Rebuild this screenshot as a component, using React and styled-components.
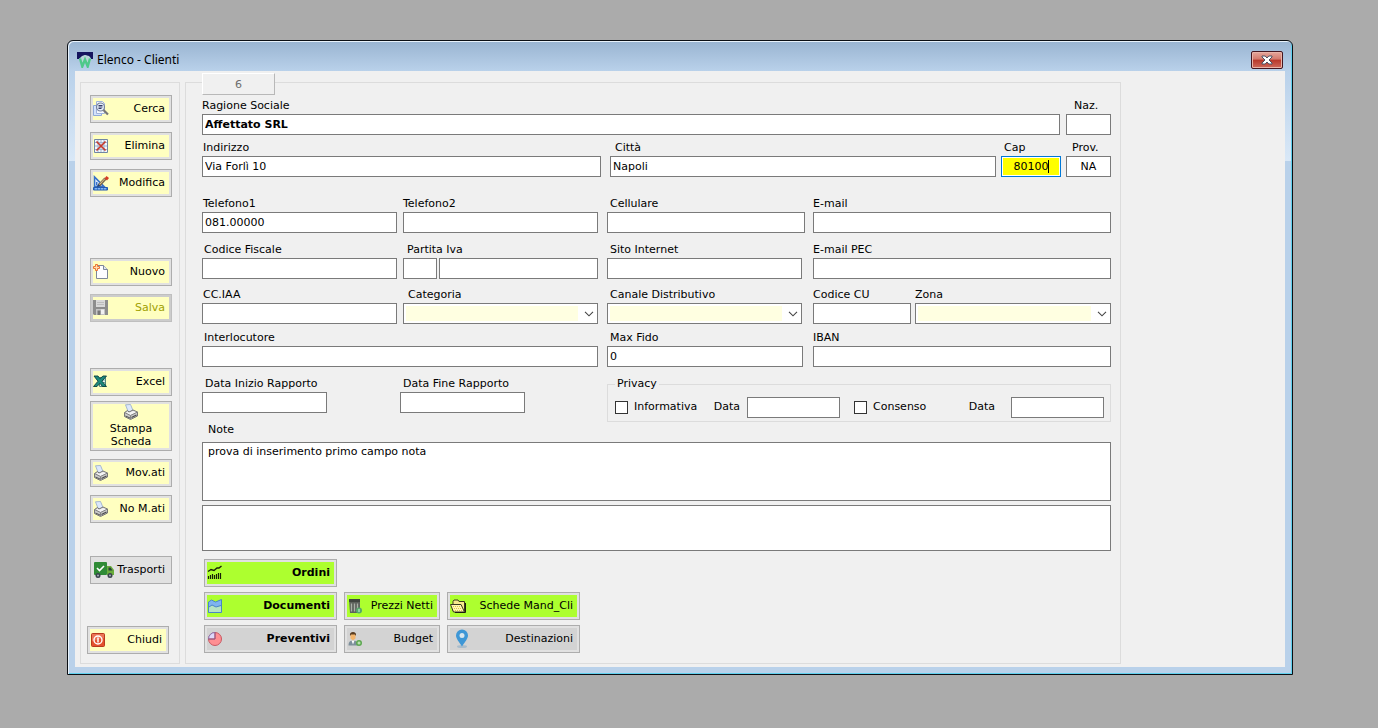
import React, { useId } from 'react'
import styled, { createGlobalStyle, css } from 'styled-components'

export default function App() {
  return (
    <Desktop>
      <GlobalStyle />
      <Window>
        <TitleBar>
          <AppIcon />
          <Title>Elenco - Clienti</Title>
          <CloseButton type="button" aria-label="Chiudi finestra">
            <CloseIcon />
          </CloseButton>
        </TitleBar>
        <Client>
          <Sidebar>
            <Group $gap={9}>
              <Tool icon={<SearchIcon />}>Cerca</Tool>
              <Tool icon={<DeleteIcon />}>Elimina</Tool>
              <Tool icon={<EditIcon />}>Modifica</Tool>
            </Group>
            <Group $top={61} $gap={8}>
              <Tool icon={<NewIcon />}>Nuovo</Tool>
              <Tool icon={<SaveIcon />} disabled>
                Salva
              </Tool>
            </Group>
            <Group $top={46} $gap={5}>
              <Tool icon={<ExcelIcon />}>Excel</Tool>
              <StackedButton type="button">
                <PrinterIcon />
                Stampa
                <br />
                Scheda
              </StackedButton>
            </Group>
            <Group $top={8} $gap={8}>
              <Tool icon={<PrinterIcon />}>Mov.ati</Tool>
              <Tool icon={<PrinterIcon />}>No M.ati</Tool>
            </Group>
            <Group $top={33}>
              <Tool icon={<TruckIcon />} tone="plain">
                Trasporti
              </Tool>
            </Group>
            <Footer>
              <Tool icon={<PowerIcon />}>Chiudi</Tool>
            </Footer>
          </Sidebar>
          <ClientForm />
        </Client>
      </Window>
    </Desktop>
  )
}

function ClientForm() {
  return (
    <Panel onSubmit={(e) => e.preventDefault()}>
      <Counter>6</Counter>
      <Row $cols="1fr 45px" $gap={6} $top={3}>
        <Field label="Ragione Sociale" value="Affettato SRL" bold />
        <Field label="Naz." indent={8} />
      </Row>
      <Row $cols="399fr 501fr" $gap={9} $top={5}>
        <Field label="Indirizzo" value="Via Forlì 10" indent={1} />
        <Row $cols="1fr 60px 45px" $gap={5}>
          <Field label="Città" value="Napoli" indent={5} />
          <Field label="Cap" value="80100" indent={3} align="center" active />
          <Field label="Prov." value="NA" indent={6} align="center" />
        </Row>
      </Row>
      <Halves $top={19}>
        <Row $cols="1fr 1fr" $gap={6}>
          <Field label="Telefono1" value="081.00000" indent={1} />
          <Field label="Telefono2" />
        </Row>
        <Row $cols="198fr 298fr" $gap={8}>
          <Field label="Cellulare" indent={3} />
          <Field label="E-mail" />
        </Row>
      </Halves>
      <Halves $top={9}>
        <Row $cols="195fr 195fr" $gap={6}>
          <Field label="Codice Fiscale" indent={2} />
          <VatField />
        </Row>
        <Row $cols="195fr 298fr" $gap={11}>
          <Field label="Sito Internet" indent={3} />
          <Field label="E-mail PEC" />
        </Row>
      </Halves>
      <Halves $top={8}>
        <Row $cols="1fr 1fr" $gap={6}>
          <Field label="CC.IAA" indent={1} />
          <SelectField label="Categoria" indent={5} />
        </Row>
        <Row $cols="195fr 298fr" $gap={11}>
          <SelectField label="Canale Distributivo" indent={3} />
          <Row $cols="98fr 196fr" $gap={4}>
            <Field label="Codice CU" />
            <SelectField label="Zona" />
          </Row>
        </Row>
      </Halves>
      <Halves $top={6}>
        <Field label="Interlocutore" indent={2} />
        <Row $cols="196fr 298fr" $gap={10}>
          <Field label="Max Fido" value="0" indent={3} />
          <Field label="IBAN" />
        </Row>
      </Halves>
      <Halves $top={9}>
        <Row $cols="198fr 198fr" $gap={0}>
          <Field label="Data Inizio Rapporto" indent={3} width={125} />
          <Field label="Data Fine Rapporto" indent={3} width={125} />
        </Row>
        <Privacy>
          <legend>Privacy</legend>
          <PrivacyPart>
            <CheckLabel>
              <Check type="checkbox" />
              Informativa
            </CheckLabel>
            <DateLabel $gap={7}>
              Data
              <Input type="text" />
            </DateLabel>
          </PrivacyPart>
          <PrivacyPart>
            <CheckLabel>
              <Check type="checkbox" />
              Consenso
            </CheckLabel>
            <DateLabel $gap={16}>
              Data
              <Input type="text" />
            </DateLabel>
          </PrivacyPart>
        </Privacy>
      </Halves>
      <Notes>
        <Label htmlFor="note" $indent={6}>
          Note
        </Label>
        <NoteArea id="note" $height={59} defaultValue="prova di inserimento primo campo nota" />
        <NoteArea aria-label="Note 2" $height={46} />
      </Notes>
      <Links>
        <FirstLink>
          <Tool icon={<OrdersIcon />} tone="green" bold>
            Ordini
          </Tool>
        </FirstLink>
        <Tool icon={<AreaIcon />} tone="green" bold>
          Documenti
        </Tool>
        <Tool icon={<CalculatorIcon />} tone="green">
          Prezzi Netti
        </Tool>
        <Tool icon={<FolderIcon />} tone="green">
          Schede Mand_Cli
        </Tool>
        <Tool icon={<PieIcon />} tone="gray" bold>
          Preventivi
        </Tool>
        <Tool icon={<PersonIcon />} tone="gray">
          Budget
        </Tool>
        <Tool icon={<PinIcon />} tone="gray">
          Destinazioni
        </Tool>
      </Links>
    </Panel>
  )
}

function Tool({ icon, tone = 'yellow', bold, disabled, children }) {
  return (
    <ToolButton type="button" $tone={tone} $bold={bold} disabled={disabled}>
      {icon}
      <span>{children}</span>
    </ToolButton>
  )
}

function Field({ label, value, indent = 0, bold, align, active, width }) {
  const id = useId()
  return (
    <FieldBox>
      <Label htmlFor={id} $indent={indent}>
        {label}
      </Label>
      <Input id={id} type="text" defaultValue={value} $bold={bold} $align={align} $active={active} $width={width} />
    </FieldBox>
  )
}

function VatField() {
  return (
    <FieldBox>
      <Label htmlFor="piva" $indent={4}>
        Partita Iva
      </Label>
      <Row $cols="34px 1fr" $gap={2}>
        <Input type="text" aria-label="Prefisso Partita Iva" />
        <Input id="piva" type="text" />
      </Row>
    </FieldBox>
  )
}

function SelectField({ label, indent = 0 }) {
  const id = useId()
  return (
    <FieldBox>
      <Label htmlFor={id} $indent={indent}>
        {label}
      </Label>
      <SelectBox>
        <Select id={id} />
        <svg width="10" height="6" viewBox="0 0 10 6">
          <path d="M1 .8l4 4 4-4" fill="none" stroke="#444" strokeWidth="1.1" />
        </svg>
      </SelectBox>
    </FieldBox>
  )
}

function Icon({ width = 16, children }) {
  return (
    <svg width={width} height="16" viewBox={`0 0 ${width} 16`} fill="none" aria-hidden="true">
      {children}
    </svg>
  )
}

const AppIcon = () => (
  <Icon>
    <path d="M0 0h16v7h-2l-1-2-3-1-2-1-3 2-3 2H0z" fill="#15155e" />
    <path d="M2 7l3-3 3-1 4 1 2 3v3H3z" fill="#b9d6d8" />
    <path d="M3 6.500l2.300 8 2.700-7 2.700 7 2.300-8" stroke="#4fc98a" strokeWidth="2.400" />
  </Icon>
)

const CloseIcon = () => (
  <svg width="12" height="10" viewBox="0 0 12 10" aria-hidden="true">
    <path
      d="M1 1h3.200L6 3l1.800-2H11v1L8 5l3 3v1H7.800L6 7 4.200 9H1V8l3-3-3-3z"
      fill="#fff"
      stroke="#4a5163"
      strokeWidth="1"
    />
  </svg>
)

const SearchIcon = () => (
  <Icon>
    <path d="M.5 4.500h8v10h-8z" fill="#d5e3fa" stroke="#8fa9d8" />
    <path d="M3.500.5h6l2 2v10h-8z" fill="#f4f8ff" stroke="#a0b4dc" />
    <circle cx="7.500" cy="6" r="4" fill="#e5effc" stroke="#77839b" strokeWidth="1.200" />
    <path d="M5.500 4.500h4M5.500 6h4M5.500 7.500h3" stroke="#343b66" />
    <path d="M10.500 9l4.500 4.500" stroke="#777" strokeWidth="2.200" />
  </Icon>
)

const DeleteIcon = () => (
  <Icon>
    <path d="M1.500 1.500h13v13h-13z" fill="#f3f6fb" stroke="#7186a4" />
    <path d="M2 4.500h12M2 8h12M2 11.500h12M5 2v12M8 2v12M11 2v12" stroke="#9fb4d0" />
    <path d="M3.500 3.500l9 9M12.500 3.500l-9 9" stroke="#c43a2c" strokeWidth="1.700" />
  </Icon>
)

const EditIcon = () => (
  <Icon>
    <path d="M1.500 2v9.500H11z" fill="#dceafd" stroke="#3670c8" strokeWidth="1.600" />
    <path d="M3.500 7v3h3z" fill="#fff" stroke="#3670c8" />
    <path d="M.5 12.500h14v2.500H.5z" fill="#3f85dc" stroke="#2459ae" />
    <path d="M3 13v1.500M6 13v1.500M9 13v1.500M12 13v1.500" stroke="#cfe3ff" />
    <path d="M6 10.500l6.500-7" stroke="#7c6c50" strokeWidth="3" />
    <path d="M6.500 9.500L12 3.500" stroke="#e3c78c" />
    <path d="M11.500 3.500l2-2.500 2.500 2-2 2.500z" fill="#d63c24" />
    <path d="M5 9l2.500 2L4 12z" fill="#26406e" />
  </Icon>
)

const NewIcon = () => (
  <Icon>
    <path d="M3.500 1.500h7l4 4v9h-11z" fill="#fdfdff" stroke="#7e8899" />
    <path d="M10.500 1.500v4h4" fill="#dfe6f2" stroke="#7e8899" />
    <path d="M2.500.5h2v2h2v2h-2v2h-2v-2h-2v-2h2z" fill="#ffdcae" stroke="#ea7433" />
  </Icon>
)

const SaveIcon = () => (
  <Icon>
    <path d="M0 0h15v15H1l-1-1z" fill="#8d8d8d" />
    <path d="M3 0h9v7H3z" fill="#d9d9d9" />
    <path d="M4 2.500h7M4 4.500h7" stroke="#bdbdbd" />
    <path d="M3 9h9v6H3z" fill="#c5c5c5" />
    <path d="M4.500 10.500h3V15h-3z" fill="#777" />
    <path d="M8 9.500h3V14H8z" fill="#f1f1f1" />
  </Icon>
)

const ExcelIcon = () => (
  <Icon>
    <path d="M6.500 3.500h6v9h-6z" fill="#e6f3ee" stroke="#51877c" />
    <path d="M8 6h4M8 8.500h4M8 11h4" stroke="#79aa9f" />
    <path
      d="M1 2h4l2 2.700L10 2h3.500L9 7.200l4.500 5.300h-4L7 9.300 4 12.500H.5L5 7.200z"
      fill="#1c8a7c"
      stroke="#0d3f40"
      strokeWidth=".9"
    />
  </Icon>
)

const PrinterIcon = () => (
  <Icon>
    <path d="M2.500.8l5-.3 2.500 6-4.500 2z" fill="#dce8fc" stroke="#94a9cc" strokeWidth=".8" />
    <path d="M1.500 8.500L4.500 6.500l1.500 1.500 4-2 4.500 2v4l-7 3.500-6-3z" fill="#c9c9c9" stroke="#777" />
    <path d="M3 8.800l4.500 2.200 6-2.800-3.500-1.200-4 1.800-1.500-1z" fill="#f4f4f4" />
    <path d="M1.500 8.500l6 3 7-3.500M7.500 11.500V15" stroke="#858585" />
    <path d="M8.500 13.500l5-2.500" stroke="#4a4a4a" strokeWidth="1.300" />
    <path d="M2.500 12l4.500 2" stroke="#555" />
  </Icon>
)

const TruckIcon = () => (
  <Icon width={21}>
    <rect x="1" y="0" width="13" height="13" rx="1" fill="#2f8b36" />
    <path d="M14 4h4l3 4v5h-7z" fill="#69ad3c" />
    <path d="M15.500 5.500h2L19.500 8.500h-4z" fill="#25443b" />
    <path d="M4 6l2.500 2.500L11 4" stroke="#fff" strokeWidth="1.600" />
    <circle cx="5" cy="13.500" r="2.500" fill="#39424d" />
    <circle cx="5" cy="13.500" r="1" fill="#a8b0b8" />
    <circle cx="17" cy="13.500" r="2.500" fill="#39424d" />
    <circle cx="17" cy="13.500" r="1" fill="#a8b0b8" />
  </Icon>
)

const PowerIcon = () => (
  <Icon>
    <rect x="1.500" y="1.500" width="13" height="13" rx="1" fill="#e4512e" stroke="#b83a1e" />
    <path d="M2 2h12v4L2 9z" fill="#f08466" opacity=".7" />
    <circle cx="8" cy="8" r="4" stroke="#fff" strokeWidth="1.400" />
    <path d="M8 5.500v5" stroke="#fff" strokeWidth="1.500" />
  </Icon>
)

const OrdersIcon = () => (
  <Icon>
    <path
      d="M1.500 14v-3M3.500 14v-4M5.500 14V9M7.500 14v-4M9.500 14V9M11.500 14V8M13.500 14V8"
      stroke="#182008"
      strokeWidth="1.200"
    />
    <path d="M1 6.500l3-2 3 1 3-2.500h2L14.500 1" stroke="#182008" strokeWidth="1.400" />
  </Icon>
)

const AreaIcon = () => (
  <Icon>
    <path d="M1.500 4l3-2 4 2 6-2.500v13h-13z" fill="#7eb4f0" stroke="#4a86c6" />
    <path d="M2 9l3-2 4 2 5-1.500v6.500H2z" fill="#b6e3c4" />
    <path d="M2 9l3-2 4 2 5-1.500" stroke="#4a86c6" />
  </Icon>
)

const CalculatorIcon = () => (
  <Icon>
    <path d="M2 1h11v14H3z" fill="#5d625c" />
    <path d="M2 1h11v3H2z" fill="#404540" />
    <path d="M4.500 5.500v8M7.500 5.500v8M10.500 5.500v8" stroke="#a9b0a7" strokeWidth="1.300" />
    <circle cx="12" cy="12.500" r="3" fill="#55a76b" />
    <path d="M12 11v3" stroke="#d6f3dc" />
  </Icon>
)

const FolderIcon = () => (
  <Icon>
    <path d="M3 3.500l1-1.500h4l1 1.500h5.500V13H3z" fill="#f6e98c" stroke="#3a3a1c" />
    <path d="M.5 6.500H11l3.500 7.500h-11z" fill="#fff6b0" stroke="#3a3a1c" />
    <path d="M3 8.500h7M4 10.500h7.500M5 12.500h7" stroke="#dcc34e" strokeDasharray="1 1" />
    <path d="M15.500 5v9.500H5" stroke="#1c1c10" />
  </Icon>
)

const PieIcon = () => (
  <Icon>
    <circle cx="8" cy="8" r="6.500" fill="#ff8f92" stroke="#c95863" />
    <path d="M8 8H1.500A6.500 6.500 0 0 1 8 1.500z" fill="#dfd9fa" stroke="#8579b5" />
    <path d="M8 1.500V8H1.500" stroke="#b14a63" />
  </Icon>
)

const PersonIcon = () => (
  <Icon>
    <path d="M1.500 14.500c0-4 2-5 4.500-5s5 1 5 5z" fill="#7c8f9b" />
    <path d="M4.500 9.500l1.500 4 1.500-4z" fill="#fff" />
    <path d="M3.500 3h5v4.500L6 9.500 3.500 7.500z" fill="#f3b56d" />
    <path d="M3 5c-.5-3 1-4 3-4s3.500 1 3 4l-1-1.500H4z" fill="#5a3c20" />
    <circle cx="12" cy="12" r="3" fill="#5da851" />
    <path d="M10.500 12h3M12 10.500v3" stroke="#d8f2cf" />
  </Icon>
)

const PinIcon = () => (
  <svg width="22" height="20" viewBox="0 0 22 20" fill="none" aria-hidden="true">
    <ellipse cx="12" cy="17.500" rx="5" ry="1.500" fill="#a9bccb" />
    <path d="M12 17.500C9 13 6 9.500 6 6.500a6 6 0 0 1 12 0C18 9.500 15 13 12 17.500z" fill="#3e97d6" />
    <circle cx="12" cy="6.500" r="2.500" fill="#d8e6ee" />
  </svg>
)

const GlobalStyle = createGlobalStyle`
  * {
    box-sizing: border-box;
  }
  body {
    margin: 0;
    background: #ababab;
    color: #000;
    font: 11px/14px Verdana, 'DejaVu Sans', sans-serif;
  }
  button, input, select, textarea {
    margin: 0;
    font: inherit;
    color: inherit;
    border-radius: 0;
    outline: none;
  }
`

const Desktop = styled.div`
  min-height: 100vh;
  padding: 40px 85px 53px 67px;
`

const Window = styled.main`
  padding: 0 7px 7px;
  border: 1px solid #0b0f14;
  border-radius: 6px 6px 0 0;
  background: linear-gradient(to bottom, #99b4d1 0, #b9d1ea 30px, #d9e8f7 120px, #b9d1ea 120px);
  box-shadow: inset 1px 1px 0 #e8f2fb, inset -1px -1px 0 #5fd0ee;
`

const TitleBar = styled.header`
  display: flex;
  align-items: center;
  gap: 4px;
  height: 30px;
  padding: 7px 2px 0 2px;
`

const Title = styled.h1`
  flex: 1;
  margin: 0;
  font: 12px/16px 'Segoe UI', 'Noto Sans', sans-serif;
`

const CloseButton = styled.button`
  display: flex;
  align-items: center;
  justify-content: center;
  width: 32px;
  height: 18px;
  padding: 0;
  border: 1px solid #451620;
  border-radius: 2px;
  background: linear-gradient(#e5a79c 0, #d4796c 45%, #b7372a 50%, #cf6a5c 100%);
  box-shadow: inset 0 0 0 1px #e9b3a8;
`

const Client = styled.div`
  display: flex;
  gap: 5px;
  padding: 11px 164px 3px 5px;
  background: #f0f0f0;
`

const Sidebar = styled.nav`
  flex: none;
  width: 100px;
  padding: 12px 7px 0 9px;
  border: 1px solid #dcdcdc;
`

const Group = styled.div`
  display: flex;
  flex-direction: column;
  gap: ${(p) => p.$gap || 0}px;
  margin-top: ${(p) => p.$top || 0}px;
`

const Footer = styled(Group)`
  margin: 42px 3px 0 -3px;
`

const tones = {
  yellow: '#ffffc0',
  green: '#adff2f',
  gray: '#d3d3d3',
  plain: '#e1e1e1',
}

const buttonFrame = css`
  border: 1px solid #adadad;
  box-shadow: inset 0 0 0 2px #e1e1e1;
`

const ToolButton = styled.button`
  ${buttonFrame}
  display: flex;
  align-items: center;
  justify-content: space-between;
  height: 28px;
  padding: 0 6px 0 2px;
  background: ${(p) => tones[p.$tone]};
  font-weight: ${(p) => (p.$bold ? 'bold' : 'normal')};
  white-space: nowrap;
  &:disabled {
    border-color: #bfbfbf;
    box-shadow: inset 0 0 0 2px #cccccc;
    color: #a0a000;
  }
`

const StackedButton = styled.button`
  ${buttonFrame}
  height: 50px;
  padding: 0;
  background: ${tones.yellow};
  line-height: 13px;
  svg {
    display: block;
    margin: 0 auto 2px;
  }
`

const Panel = styled.form`
  flex: 1;
  min-width: 0;
  padding: 0 9px 10px 16px;
  border: 1px solid #dcdcdc;
`

const Counter = styled.output`
  display: block;
  width: 73px;
  height: 22px;
  margin-top: -10px;
  border: 1px solid;
  border-color: #fff #b8b8b8 #b8b8b8 #fff;
  background: #f0f0f0;
  color: #6d6d6d;
  line-height: 22px;
  text-align: center;
`

const Row = styled.div`
  display: grid;
  grid-template-columns: ${(p) => p.$cols};
  column-gap: ${(p) => p.$gap}px;
  margin-top: ${(p) => p.$top || 0}px;
`

const Halves = styled(Row).attrs({ $cols: '396fr 504fr', $gap: 9 })``

const FieldBox = styled.div`
  display: flex;
  flex-direction: column;
  min-width: 0;
`

const Label = styled.label`
  padding-left: ${(p) => p.$indent}px;
  line-height: 16px;
  white-space: nowrap;
`

const Input = styled.input`
  width: ${(p) => (p.$width ? `${p.$width}px` : '100%')};
  height: 21px;
  padding: 0 2px;
  border: 1px solid #7a7a7a;
  background: #fff;
  font-weight: ${(p) => (p.$bold ? 'bold' : 'normal')};
  text-align: ${(p) => p.$align || 'left'};
  ${(p) =>
    p.$active &&
    css`
      border-color: #0078d7;
      background: linear-gradient(#000, #000) no-repeat 46px 3px / 1px 13px, #ff0;
      box-shadow: inset 0 0 0 1px #fff;
    `}
`

const SelectBox = styled.div`
  position: relative;
  svg {
    position: absolute;
    right: 4px;
    top: 8px;
    pointer-events: none;
  }
`

const Select = styled.select`
  display: block;
  width: 100%;
  height: 21px;
  border: 1px solid #7a7a7a;
  background: linear-gradient(#ffffe1, #ffffe1) no-repeat 2px 2px / calc(100% - 21px) 15px, #fff;
  appearance: none;
`

const Privacy = styled.fieldset`
  display: flex;
  justify-content: space-between;
  min-width: 0;
  height: 46px;
  margin: 0;
  padding: 0 6px 0 7px;
  border: 1px solid #dcdcdc;
  legend {
    padding: 0 2px;
    line-height: 16px;
  }
`

const PrivacyPart = styled.div`
  display: flex;
  align-items: center;
  justify-content: space-between;
  flex: 0 1 225px;
  height: 30px;
  & + & {
    flex-basis: 250px;
  }
`

const CheckLabel = styled.label`
  display: flex;
  align-items: center;
  gap: 6px;
`

const Check = styled.input`
  width: 13px;
  height: 13px;
  border: 1px solid #333;
  background: #fff;
  appearance: none;
  &:checked {
    box-shadow: inset 0 0 0 2px #fff;
    background: #333;
  }
`

const DateLabel = styled.label`
  display: flex;
  align-items: center;
  gap: ${(p) => p.$gap}px;
  input {
    width: 93px;
  }
`

const Notes = styled.div`
  display: flex;
  flex-direction: column;
  gap: 4px;
`

const NoteArea = styled.textarea`
  height: ${(p) => p.$height}px;
  padding: 2px 5px;
  border: 1px solid #7a7a7a;
  background: #fff;
  resize: none;
`

const Links = styled.div`
  display: grid;
  grid-template-columns: 133px 96px 133px;
  gap: 5px 7px;
  margin: 8px 0 0 2px;
`

const FirstLink = styled.div`
  display: grid;
  grid-column: 1 / -1;
  grid-template-columns: 133px;
`
